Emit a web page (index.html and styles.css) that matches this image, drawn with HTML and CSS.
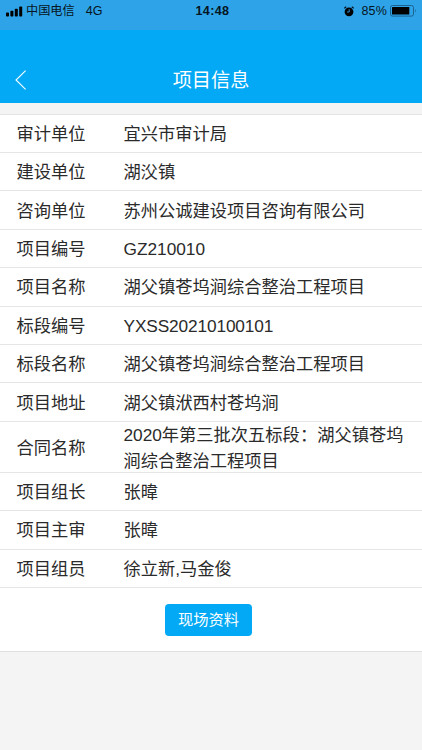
FILE: index.html
```html
<!DOCTYPE html>
<html lang="zh-CN">
<head>
    <meta charset="UTF-8">
    <meta name="viewport" content="width=device-width, initial-scale=1.0">
    <title>项目信息</title>
    <link rel="stylesheet" href="styles.css">
</head>
<body>
    <div class="status-bar">
        <div class="status-left">
            <svg class="signal" width="17" height="11" viewBox="0 0 17 11">
                <rect x="0" y="6.5" width="3" height="4" rx="0.8"/>
                <rect x="4.4" y="4.7" width="3" height="5.8" rx="0.8"/>
                <rect x="8.8" y="2.8" width="3" height="7.7" rx="0.8"/>
                <rect x="13.2" y="0.4" width="3" height="10.1" rx="0.8"/>
            </svg>
            <span class="carrier">中国电信</span>
            <span class="network">4G</span>
        </div>
        <div class="time">14:48</div>
        <div class="status-right">
            <svg class="alarm" width="10" height="11" viewBox="0 0 10 11">
                <circle cx="5" cy="5.8" r="4.4"/>
                <path d="M0.3 2.4 L2.2 0.7 M9.7 2.4 L7.8 0.7" stroke="#061522" stroke-width="1.2"/>
                <path d="M5.2 3.2 V6 H3" fill="none" stroke="#2fa3e7" stroke-width="0.9"/>
            </svg>
            <span class="percent">85%</span>
            <svg class="battery" width="27" height="12" viewBox="0 0 27 12">
                <rect x="0.5" y="0.5" width="23" height="10.6" rx="2" fill="none" stroke="#1b6291"/>
                <rect x="2" y="2" width="17.3" height="7.6" rx="0.5"/>
                <path d="M25 4 Q26.6 5.8 25 7.8 Z" fill="#1b6291"/>
            </svg>
        </div>
    </div>

    <div class="header">
        <a class="back" href="#">
            <svg width="12" height="20" viewBox="0 0 12 20">
                <path d="M10.6 0.6 L1 10 L10.6 19.4" fill="none" stroke="#fff" stroke-width="1.1"/>
            </svg>
        </a>
        <h1>项目信息</h1>
    </div>

    <div class="content">
        <div class="row"><div class="label">审计单位</div><div class="value">宜兴市审计局</div></div>
        <div class="row"><div class="label">建设单位</div><div class="value">湖㳇镇</div></div>
        <div class="row"><div class="label">咨询单位</div><div class="value">苏州公诚建设项目咨询有限公司</div></div>
        <div class="row"><div class="label">项目编号</div><div class="value">GZ210010</div></div>
        <div class="row"><div class="label">项目名称</div><div class="value">湖父镇苍坞涧综合整治工程项目</div></div>
        <div class="row"><div class="label">标段编号</div><div class="value code">YXSS20210100101</div></div>
        <div class="row"><div class="label">标段名称</div><div class="value">湖父镇苍坞涧综合整治工程项目</div></div>
        <div class="row"><div class="label">项目地址</div><div class="value">湖父镇洑西村苍坞涧</div></div>
        <div class="row tall"><div class="label">合同名称</div><div class="value">2020年第三批次五标段：湖父镇苍坞涧综合整治工程项目</div></div>
        <div class="row"><div class="label">项目组长</div><div class="value">张暐</div></div>
        <div class="row"><div class="label">项目主审</div><div class="value">张暐</div></div>
        <div class="row"><div class="label">项目组员</div><div class="value">徐立新,马金俊</div></div>
        <div class="actions">
            <button>现场资料</button>
        </div>
    </div>
</body>
</html>
```
FILE: styles.css
```css
* {
    box-sizing: border-box;
}
body {
    margin: 0;
    font-family: "Liberation Sans", "Noto Sans CJK SC", sans-serif;
    background: #f4f4f4;
    color: #2a2a2a;
}
.status-bar {
    display: grid;
    grid-template-columns: 1fr auto 1fr;
    align-items: center;
    height: 30px;
    padding: 0 5px 8px 6px;
    background: #2fa3e7;
    color: #061522;
    font-size: 12px;
    line-height: 22px;
}
.status-left,
.status-right {
    display: flex;
    align-items: center;
}
.status-right {
    justify-content: flex-end;
}
.carrier {
    margin-left: 3px;
    font-size: 12.2px;
}
.network {
    margin-left: 11px;
    font-size: 12.5px;
}
.time {
    padding-left: 2px;
    font-size: 12.5px;
    font-weight: bold;
    letter-spacing: 0.4px;
}
.percent {
    margin: 0 3px 0 7px;
    font-size: 12.5px;
    letter-spacing: 0.2px;
}
.header {
    display: grid;
    grid-template-columns: 60px 1fr 60px;
    align-items: center;
    height: 73px;
    padding-top: 26px;
    background: #03a9f5;
    color: #fff;
}
.back {
    display: flex;
    padding-left: 15px;
}
h1 {
    margin: 0;
    padding-top: 2px;
    font-size: 19.2px;
    font-weight: normal;
    line-height: 46px;
    text-align: center;
}
.content {
    margin-top: 10.6px;
    background: #fff;
    border-top: 1px solid #e4e4e4;
    border-bottom: 1px solid #e0e0e0;
}
.row {
    display: flex;
    align-items: center;
    height: 38.4px;
    padding: 1px 14px 0 16.5px;
    border-bottom: 1px solid #e6e6e6;
    font-size: 17.25px;
    line-height: 26px;
}
.row.tall {
    height: 51px;
    padding-top: 3px;
}
.label {
    flex: 0 0 107px;
}
.value {
    flex: 1;
}
.code {
    letter-spacing: -0.12px;
}
.actions {
    display: flex;
    justify-content: center;
    padding: 16px 5px 15px 0;
}
.actions button {
    width: 87px;
    height: 32px;
    padding: 0;
    border: none;
    border-radius: 4px;
    background: #03a9f5;
    color: #fff;
    font-family: inherit;
    font-size: 15.3px;
    line-height: 32px;
}
```
